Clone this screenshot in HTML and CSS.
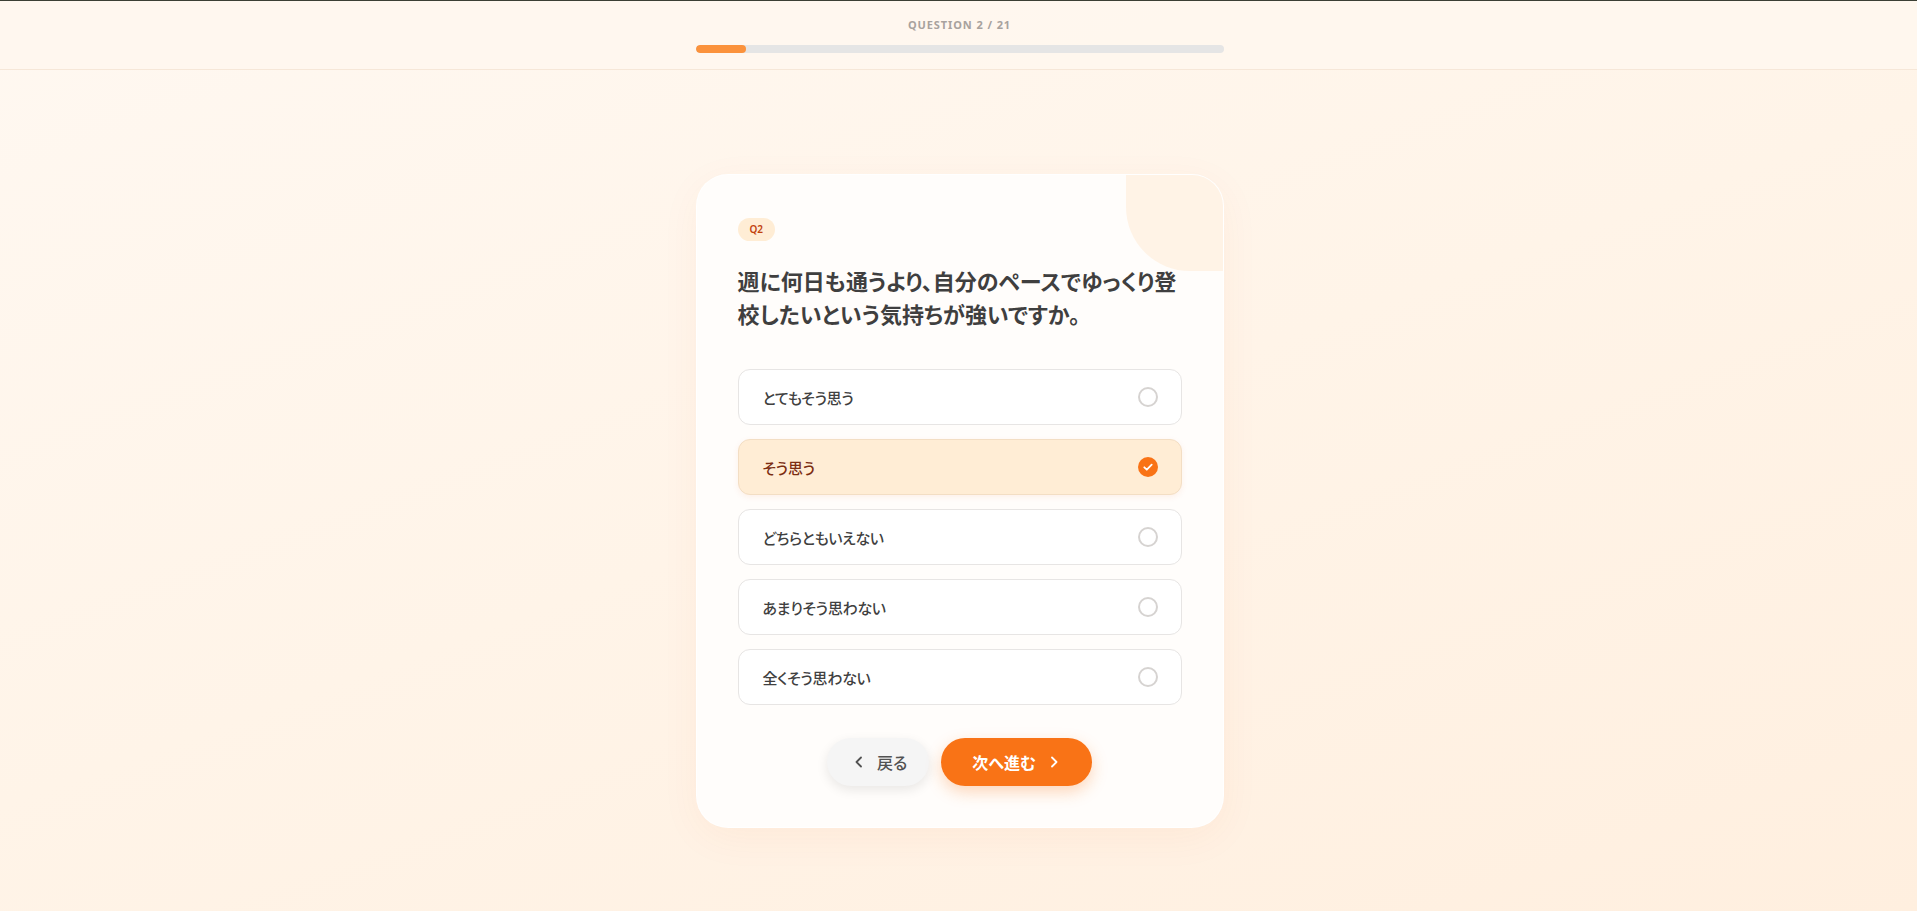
FILE: index.html
```html
<!DOCTYPE html>
<html lang="ja">
<head>
<meta charset="utf-8">
<title>診断 Q2</title>
<link rel="stylesheet" href="styles.css">
</head>
<body>
<header class="topbar">
  <div class="topbar-inner">
    <div class="progress-label">QUESTION 2 / 21</div>
    <div class="progress-track"><div class="progress-fill" style="width: 9.5%"></div></div>
  </div>
</header>
<main class="stage">
  <section class="card">
    <div class="badge">Q2</div>
    <h2 class="question">週に何日も通うより、自分のペースでゆっくり登校したいという気持ちが強いですか。</h2>
    <ul class="options">
      <li class="option"><span class="option-text">とてもそう思う</span><span class="radio"></span></li>
      <li class="option is-selected"><span class="option-text">そう思う</span><span class="radio checked"><svg viewBox="0 0 20 20" width="20" height="20"><path d="M6.3 10.3 L8.8 12.7 L13.7 7.6" fill="none" stroke="#fff" stroke-width="1.8" stroke-linecap="round" stroke-linejoin="round"/></svg></span></li>
      <li class="option"><span class="option-text">どちらともいえない</span><span class="radio"></span></li>
      <li class="option"><span class="option-text">あまりそう思わない</span><span class="radio"></span></li>
      <li class="option"><span class="option-text">全くそう思わない</span><span class="radio"></span></li>
    </ul>
    <div class="actions">
      <button class="btn btn-back"><svg class="chev" viewBox="0 0 16 16" width="16" height="16"><path d="M10 3.5 L5.5 8 L10 12.5" fill="none" stroke="currentColor" stroke-width="1.8" stroke-linecap="round" stroke-linejoin="round"/></svg><span>戻る</span></button>
      <button class="btn btn-next"><span>次へ進む</span><svg class="chev" viewBox="0 0 16 16" width="16" height="16"><path d="M6 3.5 L10.5 8 L6 12.5" fill="none" stroke="currentColor" stroke-width="1.8" stroke-linecap="round" stroke-linejoin="round"/></svg></button>
    </div>
  </section>
</main>
</body>
</html>
```
FILE: styles.css
```css
* { box-sizing: border-box; }

html { height: 100%; }

body {
  margin: 0;
  min-height: 100vh;
  font-family: "Noto Sans", "Noto Sans CJK JP", sans-serif;
  background: linear-gradient(160deg, #fff8f1 0%, #fff4e8 50%, #ffefdf 100%);
  border-top: 1px solid #3b3f34;
  color: #404040;
  overflow: hidden;
}

.topbar {
  background: rgba(255, 247, 239, 0.85);
  border-bottom: 1px solid #f6e7d8;
  height: 69px;
}

.topbar-inner {
  width: 528px;
  margin: 0 auto;
  padding-top: 15px;
  display: flex;
  flex-direction: column;
  align-items: center;
  transform: translateX(1px);
}

.progress-label {
  font-size: 11px;
  font-weight: 700;
  letter-spacing: 0.9px;
  line-height: 18px;
  color: #a8a29e;
}

.progress-track {
  margin-top: 11px;
  width: 100%;
  height: 8px;
  border-radius: 4px;
  background: #e5e5e5;
  overflow: hidden;
}

.progress-fill {
  height: 100%;
  border-radius: 4px;
  background: #fb923c;
}

.stage {
  display: flex;
  justify-content: center;
  padding-top: 104px;
  padding-left: 2px;
}

.card {
  position: relative;
  overflow: hidden;
  width: 528px;
  padding: 43px 41px 41px;
  border-radius: 32px;
  background: #fffdfb;
  border: 1px solid rgba(255, 255, 255, 0.9);
  box-shadow: 0 10px 40px rgba(234, 88, 12, 0.05);
}

.card::before {
  content: "";
  position: absolute;
  top: 0;
  right: 0;
  width: 97px;
  height: 96px;
  background: #fff3e6;
  border-bottom-left-radius: 64px;
}

.badge {
  position: relative;
  width: fit-content;
  height: 23px;
  padding: 0 12px;
  border-radius: 12px;
  background: #ffedd5;
  color: #c2410c;
  font-size: 10px;
  font-weight: 600;
  line-height: 23px;
}

.question {
  position: relative;
  margin: 24px 0 0;
  font-size: 22px;
  font-weight: 700;
  line-height: 33px;
  color: #3f3f3f;
  font-feature-settings: "palt";
}

.options {
  list-style: none;
  margin: 38px 0 0;
  padding: 0;
  display: flex;
  flex-direction: column;
  gap: 14px;
}

.option {
  height: 56px;
  display: flex;
  align-items: center;
  justify-content: space-between;
  padding: 0 23px 0 24px;
  border: 1px solid #e7e5e4;
  border-radius: 12px;
  background: #ffffff;
}

.option-text {
  font-size: 15px;
  font-weight: 500;
  color: #404040;
  font-feature-settings: "palt";
  letter-spacing: -0.3px;
}

.radio {
  width: 20px;
  height: 20px;
  border-radius: 50%;
  border: 2px solid #d6d3d1;
  display: flex;
  align-items: center;
  justify-content: center;
}

.option.is-selected {
  background: #ffedd5;
  border-color: #f3dec4;
  box-shadow: 0 2px 6px rgba(234, 88, 12, 0.08);
}

.option.is-selected .option-text {
  color: #7c2d12;
}

.radio.checked {
  border: none;
  background: #f97316;
}

.actions {
  margin-top: 33px;
  display: flex;
  justify-content: center;
  gap: 12px;
}

.btn {
  height: 48px;
  border: none;
  border-radius: 24px;
  display: flex;
  align-items: center;
  gap: 10px;
  font-family: inherit;
  font-size: 16px;
  font-feature-settings: "palt";
  cursor: pointer;
}

.btn-back {
  padding: 0 22px 0 24px;
  background: #f5f5f5;
  color: #525252;
  font-weight: 500;
  box-shadow: 0 4px 12px rgba(0, 0, 0, 0.09);
}

.btn-next {
  padding: 0 30px 0 31px;
  background: #f97316;
  color: #ffffff;
  font-weight: 700;
  box-shadow: 0 6px 16px rgba(249, 115, 22, 0.28);
}

.chev {
  display: block;
}
```
